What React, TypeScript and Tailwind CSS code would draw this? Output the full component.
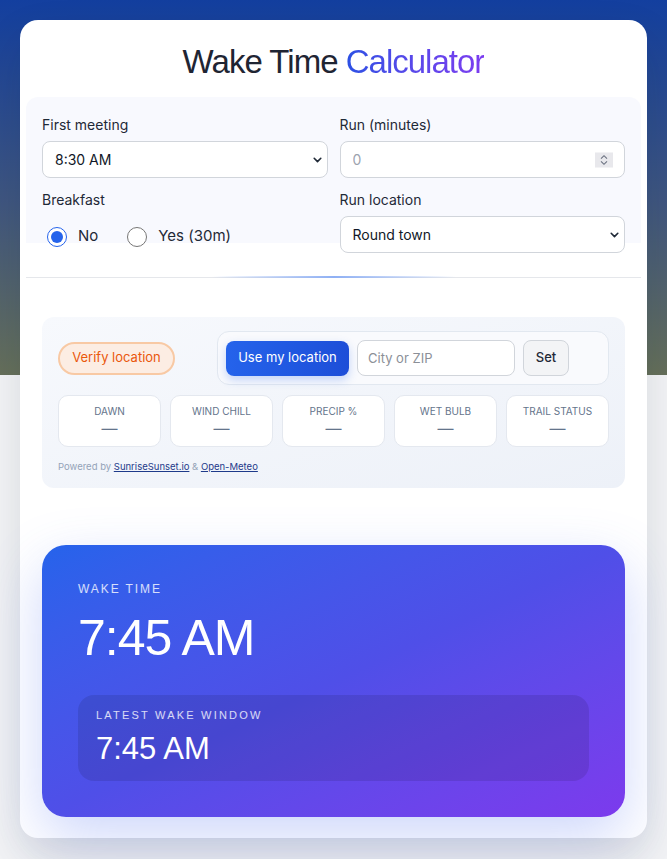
import { useState } from "react";

const stats = ["Dawn", "Wind chill", "Precip %", "Wet bulb", "Trail status"];

function Spinner() {
  return (
    <div className="absolute right-[12px] top-1/2 -translate-y-1/2 flex h-[15px] w-[18px] flex-col items-center justify-center bg-[#e8e8ec]">
      <svg width="8" height="5" viewBox="0 0 8 5" fill="none" stroke="#6b7280" strokeWidth="1.1">
        <path d="M1 4.2 4 1.2 7 4.2" />
      </svg>
      <svg width="8" height="5" viewBox="0 0 8 5" fill="none" stroke="#6b7280" strokeWidth="1.1" className="mt-[1px]">
        <path d="M1 0.8 4 3.8 7 0.8" />
      </svg>
    </div>
  );
}

function Select({ value, options }: { value: string; options: string[] }) {
  return (
    <div className="relative">
      <select
        defaultValue={value}
        className="h-[37px] w-full appearance-none rounded-lg border border-[#d1d5db] bg-white pl-3 pr-6 text-sm text-[#111827]"
      >
        {options.map((o) => (
          <option key={o}>{o}</option>
        ))}
      </select>
      <svg
        width="9"
        height="6"
        viewBox="0 0 9 6"
        fill="none"
        stroke="#1f2937"
        strokeWidth="1.6"
        strokeLinecap="round"
        strokeLinejoin="round"
        className="pointer-events-none absolute right-[6px] top-1/2 -translate-y-1/2"
      >
        <path d="M1.2 1.3 4.5 4.6 7.8 1.3" />
      </svg>
    </div>
  );
}

export default function App() {
  const [breakfast, setBreakfast] = useState("no");

  return (
    <div className="min-h-screen bg-[linear-gradient(to_bottom,#133f9f_0px,#3f5680_200px,#66705a_375px,#f3f4f6_375px)] px-5 pt-5 pb-5 font-['Inter',sans-serif]">
      <div className="rounded-[18px] bg-white px-1.5 pt-[22px] pb-[21px] shadow-[0_20px_45px_rgba(15,23,42,0.12)]">
        {/* Title */}
        <h1 className="text-center font-['Liberation_Sans',Arial,sans-serif] text-[33px] leading-10 tracking-[-0.03em] text-[#1f2533]">
          Wake Time{" "}
          <span className="bg-linear-to-r from-[#2a50e4] to-[#7b3cf0] bg-clip-text text-transparent">
            Calculator
          </span>
        </h1>

        {/* Form */}
        <div className="mt-[15px] rounded-xl bg-[linear-gradient(#f8f9fe,#f8f9fe)] bg-[length:100%_146px] bg-no-repeat px-4 pt-[18px]">
          <div className="grid grid-cols-2 gap-x-3 gap-y-3">
            <div>
              <label className="mb-1.5 block text-sm leading-5 text-[#1f2937]">First meeting</label>
              <Select value="8:30 AM" options={["8:00 AM", "8:30 AM", "9:00 AM"]} />
            </div>
            <div>
              <label className="mb-1.5 block text-sm leading-5 text-[#1f2937]">Run (minutes)</label>
              <div className="relative">
                <input
                  type="text"
                  inputMode="numeric"
                  placeholder="0"
                  className="h-[37px] w-full rounded-lg border border-[#d1d5db] bg-white px-3 text-sm text-[#111827] placeholder:text-[#9ca3af]"
                />
                <Spinner />
              </div>
            </div>
            <div>
              <label className="block text-sm leading-5 text-[#1f2937]">Breakfast</label>
              <div className="mt-1.5 flex h-[37px] items-center pt-1 pl-[5px] text-[15px] text-[#1f2937]">
                <label className="flex items-center gap-[11px]">
                  <input
                    type="radio"
                    name="bf"
                    checked={breakfast === "no"}
                    onChange={() => setBreakfast("no")}
                    className="m-0 h-5 w-5 accent-[#2563eb]"
                  />
                  No
                </label>
                <label className="ml-[29px] flex items-center gap-[11px]">
                  <input
                    type="radio"
                    name="bf"
                    checked={breakfast === "yes"}
                    onChange={() => setBreakfast("yes")}
                    className="m-0 h-5 w-5 accent-[#2563eb]"
                  />
                  Yes (30m)
                </label>
              </div>
            </div>
            <div>
              <label className="mb-1.5 block text-sm leading-5 text-[#1f2937]">Run location</label>
              <Select value="Round town" options={["Round town", "Trail", "Track"]} />
            </div>
          </div>
        </div>

        {/* Divider */}
        <div className="relative mt-6 h-px bg-[#e5e7eb]">
          <div className="absolute -top-px left-1/2 h-[2px] w-[244px] -translate-x-1/2 bg-linear-to-r from-transparent via-[#8fb0f4] to-transparent" />
        </div>

        {/* Location panel */}
        <div className="mt-[39px] px-4">
          <div className="rounded-xl bg-linear-to-br from-[#f7f9fd] to-[#edf1f8] px-4 pt-[14px] pb-[13px]">
            <div className="flex items-center justify-between">
              <button className="flex h-[33px] w-[117px] items-center justify-center rounded-full border-2 border-[#f8c9a4] bg-[#fcede3] text-[13px] text-[#ea580c]">
                Verify location
              </button>
              <div className="flex w-[392px] items-center gap-2 rounded-xl border border-[#e2e8f0] bg-[#f9fafd] px-2 py-2">
                <button className="h-[35px] w-[123px] rounded-lg bg-linear-to-r from-[#2563eb] to-[#1d4ed8] text-[13px] text-white shadow-[0_4px_10px_rgba(37,99,235,0.25)]">
                  Use my location
                </button>
                <input
                  type="text"
                  placeholder="City or ZIP"
                  className="h-9 w-[158px] rounded-lg border border-[#d1d5db] bg-white px-2.5 text-[13px] placeholder:text-[#8b8f97]"
                />
                <button className="h-9 w-[46px] rounded-lg border border-[#d1d5db] bg-[#f3f4f6] text-[13px] font-medium text-[#1f2937]">
                  Set
                </button>
              </div>
            </div>

            <div className="mt-[10px] grid grid-cols-5 gap-[9px]">
              {stats.map((s) => (
                <div
                  key={s}
                  className="flex h-[52px] flex-col items-center justify-center rounded-[10px] border border-[#e4e8ef] bg-white"
                >
                  <p className="text-[10px] leading-[14px] text-[#64748b] uppercase">{s}</p>
                  <p className="text-base leading-5 text-[#64748b]">—</p>
                </div>
              ))}
            </div>

            <p className="mt-3 text-[9.5px] leading-4 text-[#94a3b8]">
              Powered by{" "}
              <a className="text-[#1e3a8a] underline">SunriseSunset.io</a> &amp;{" "}
              <a className="text-[#1e3a8a] underline">Open-Meteo</a>
            </p>
          </div>
        </div>

        {/* Result */}
        <div className="mt-[57px] px-4">
          <div className="rounded-3xl bg-linear-to-br from-[#2563eb] via-[#4f4fe8] to-[#7c3aed] p-9 font-['Liberation_Sans',Arial,sans-serif] text-white shadow-[0_20px_55px_rgba(79,110,240,0.28)]">
            <p className="text-xs leading-4 tracking-[0.16em] text-white/80">WAKE TIME</p>
            <p className="mt-4 text-[50px] leading-none tracking-[-0.02em]">7:45 AM</p>
            <div className="mt-8 rounded-2xl bg-black/10 px-[18px] pt-3 pb-3.5">
              <p className="text-[11px] leading-4 tracking-[0.2em] text-white/80">LATEST WAKE WINDOW</p>
              <p className="mt-2 text-[31px] leading-9">7:45 AM</p>
            </div>
          </div>
        </div>
      </div>
    </div>
  );
}
